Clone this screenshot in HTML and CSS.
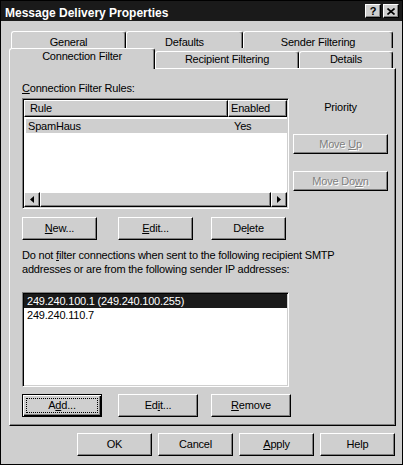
FILE: index.html
```html
<!DOCTYPE html>
<html lang="en">
<head>
  <meta charset="UTF-8">
  <title>Message Delivery Properties</title>
  <link rel="stylesheet" href="styles.css">
</head>
<body>
  <div class="window">
    <div class="titlebar">
      <span class="title">Message Delivery Properties</span>
      <div class="title-buttons">
        <span class="tbtn">?</span>
        <span class="tbtn">
          <svg width="8" height="7" viewBox="0 0 8 7"><path d="M0.5 0.5 L7.5 6.5 M7.5 0.5 L0.5 6.5" stroke="#000" stroke-width="1.6" fill="none"/></svg>
        </span>
      </div>
    </div>

    <div class="content">
      <div class="tabs">
        <div class="tab-row back">
          <div class="tab w-general">General</div>
          <div class="tab w-defaults">Defaults</div>
          <div class="tab w-sender">Sender Filtering</div>
        </div>
        <div class="tab-row front">
          <div class="tab active w-conn">Connection Filter</div>
          <div class="tab w-recip">Recipient Filtering</div>
          <div class="tab w-details">Details</div>
        </div>
      </div>

      <div class="panel">
        <div class="label"><u>C</u>onnection Filter Rules:</div>
        <div class="rules-row">
          <div class="listview">
            <div class="lv-header">
              <div class="lv-col col-rule">Rule</div>
              <div class="lv-col col-enabled">Enabled</div>
            </div>
            <div class="lv-body">
              <div class="lv-row selected-inactive">
                <span class="cell-rule">SpamHaus</span>
                <span class="cell-enabled">Yes</span>
              </div>
            </div>
            <div class="scrollbar">
              <div class="sb-btn"><svg width="4" height="7" viewBox="0 0 4 7"><polygon points="4,0 0,3.5 4,7" fill="#000"/></svg></div>
              <div class="sb-thumb"></div>
              <div class="sb-btn"><svg width="4" height="7" viewBox="0 0 4 7"><polygon points="0,0 4,3.5 0,7" fill="#000"/></svg></div>
            </div>
          </div>
          <div class="side">
            <div class="priority">Priority</div>
            <button class="btn btn-side disabled up">Move <u>U</u>p</button>
            <button class="btn btn-side disabled down">Move Do<u>w</u>n</button>
          </div>
        </div>

        <div class="btn-row">
          <button class="btn"><u>N</u>ew...</button>
          <button class="btn gap-a"><u>E</u>dit...</button>
          <button class="btn gap-b">De<u>l</u>ete</button>
        </div>

        <p class="note">Do not <u>f</u>ilter connections when sent to the following recipient SMTP<br>addresses or are from the following sender IP addresses:</p>

        <div class="iplist">
          <div class="ip-row selected">249.240.100.1 (249.240.100.255)</div>
          <div class="ip-row">249.240.110.7</div>
        </div>

        <div class="btn-row second">
          <button class="btn wide default"><span class="focus">A<u>d</u>d...</span></button>
          <button class="btn wide gap-c">Ed<u>i</u>t...</button>
          <button class="btn wide gap-d"><u>R</u>emove</button>
        </div>
      </div>

      <div class="dialog-buttons">
        <button class="btn">OK</button>
        <button class="btn">Cancel</button>
        <button class="btn"><u>A</u>pply</button>
        <button class="btn">Help</button>
      </div>
    </div>
  </div>
</body>
</html>
```

FILE: styles.css
```css
* {
  box-sizing: border-box;
}
body {
  margin: 0;
  font-family: "Liberation Sans", Arial, sans-serif;
  font-size: 11px;
  letter-spacing: -0.2px;
  color: #000;
  background: #cfcfcf;
}
.window {
  width: 403px;
  height: 465px;
  border: 1px solid #000;
  background: #cfcfcf;
}
.titlebar {
  height: 20px;
  background: #1a1a1a;
  color: #fff;
  display: flex;
  justify-content: space-between;
  align-items: flex-start;
  padding: 5px 3px 0 4px;
}
.title {
  font-weight: bold;
  font-size: 12px;
  letter-spacing: 0;
  line-height: 14px;
}
.title-buttons {
  display: flex;
  gap: 2px;
  margin-top: -2px;
}
.tbtn {
  width: 16px;
  height: 14px;
  background: #cfcfcf;
  border: 1px solid;
  border-color: #fff #000 #000 #fff;
  box-shadow: inset -1px -1px #808080;
  color: #000;
  font-weight: bold;
  font-size: 11px;
  line-height: 11px;
  display: flex;
  justify-content: center;
  align-items: center;
}
.content {
  padding: 10px 7px 0 8px;
}
.tab-row {
  display: flex;
}
.back {
  padding-left: 2px;
  height: 17px;
}
.front {
  height: 21px;
  margin-bottom: -1px;
  align-items: flex-start;
}
.tab {
  background: #cfcfcf;
  border: 1px solid;
  border-bottom: none;
  border-color: #fff #000 #000 #fff;
  border-radius: 3px 3px 0 0;
  box-shadow: inset -1px 0 #808080;
  text-align: center;
  line-height: 12px;
}
.back .tab {
  height: 17px;
  padding-top: 4px;
}
.front .tab {
  height: 17px;
  margin-top: 3px;
  padding-top: 1px;
}
.front .tab.active {
  height: 21px;
  margin-top: 0;
  padding-top: 1px;
  position: relative;
  z-index: 1;
}
.w-general { width: 115px; }
.w-defaults { width: 117px; }
.w-sender { width: 150px; }
.w-conn { width: 146px; }
.w-recip { width: 144px; }
.w-details { width: 94px; }

.panel {
  width: 387px;
  height: 358px;
  border: 1px solid;
  border-color: #fff #000 #000 #fff;
  box-shadow: inset -1px -1px #808080;
  padding: 13px 0 0 12px;
}
.label {
  line-height: 13px;
}
.rules-row {
  display: flex;
  margin-top: 3px;
}
.listview,
.iplist {
  width: 267px;
  background: #fff;
  border: 1px solid;
  border-color: #808080 #fff #fff #808080;
  box-shadow: inset 1px 1px #000, inset -1px -1px #cfcfcf;
  padding: 1px;
}
.listview {
  height: 111px;
  display: flex;
  flex-direction: column;
}
.lv-header {
  display: flex;
  height: 17px;
}
.lv-col {
  background: #cfcfcf;
  border: 1px solid;
  border-color: #fff #000 #000 #fff;
  box-shadow: inset -1px -1px #808080;
  line-height: 13px;
  padding-top: 1px;
}
.col-rule {
  width: 204px;
  padding-left: 5px;
}
.col-enabled {
  flex: 1;
  padding-left: 2px;
}
.lv-body {
  flex: 1;
  padding: 2px 0 0 2px;
}
.lv-row {
  display: flex;
  height: 14px;
  line-height: 14px;
}
.selected-inactive {
  background: #cfcfcf;
}
.cell-rule {
  width: 202px;
  padding-left: 2px;
}
.cell-enabled {
  padding-left: 6px;
}
.scrollbar {
  display: flex;
  height: 15px;
}
.sb-btn,
.sb-thumb {
  background: #cfcfcf;
  border: 1px solid;
  border-color: #fff #000 #000 #fff;
  box-shadow: inset -1px -1px #808080;
}
.sb-btn {
  width: 16px;
  display: flex;
  justify-content: center;
  align-items: center;
}
.sb-thumb {
  flex: 1;
}
.side {
  width: 95px;
  margin-left: 4px;
  display: flex;
  flex-direction: column;
}
.priority {
  text-align: center;
  line-height: 13px;
  margin-top: 3px;
}
.btn {
  width: 75px;
  height: 23px;
  padding: 0;
  background: #cfcfcf;
  border: 1px solid;
  border-color: #fff #000 #000 #fff;
  box-shadow: inset -1px -1px #808080;
  font: inherit;
  letter-spacing: inherit;
  color: #000;
  line-height: 13px;
  text-align: center;
}
.btn-side {
  width: 95px;
  height: 20px;
}
.up {
  margin-top: 20px;
}
.down {
  margin-top: 17px;
}
.disabled {
  color: #808080;
  text-shadow: 1px 1px #fff;
}
.btn-row {
  display: flex;
  margin-top: 8px;
}
.gap-a { margin-left: 21px; }
.gap-b { margin-left: 18px; }
.gap-c { margin-left: 16px; }
.gap-d { margin-left: 13px; }
.note {
  margin: 8px 0 0;
  line-height: 14px;
  white-space: nowrap;
}
.iplist {
  height: 95px;
  margin-top: 16px;
}
.ip-row {
  height: 14px;
  line-height: 14px;
  padding-left: 3px;
}
.ip-row.selected {
  background: #1a1a1a;
  color: #fff;
}
.btn-row.second {
  margin-top: 7px;
}
.btn.wide {
  width: 80px;
}
.btn.default {
  border: 1px solid #000;
  box-shadow: inset 1px 1px #fff, inset -1px -1px #000, inset -2px -2px #808080;
  display: flex;
  align-items: stretch;
}
.focus {
  flex: 1;
  margin: 3px;
  border: 1px dotted #000;
  display: flex;
  justify-content: center;
  align-items: center;
}
.dialog-buttons {
  display: flex;
  justify-content: flex-end;
  gap: 6px;
  margin-top: 7px;
}
```
